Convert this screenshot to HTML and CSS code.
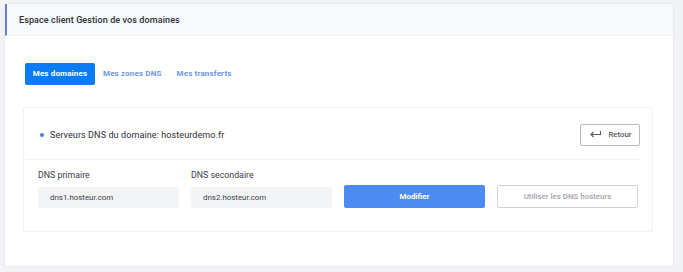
FILE: index.html
```html
<!DOCTYPE html>
<html lang="fr">
<head>
  <meta charset="UTF-8" />
  <meta name="viewport" content="width=device-width, initial-scale=1.0" />
  <title>Espace client - Mes domaines</title>
  <link rel="stylesheet" href="styles.css">
</head>
<body>
  <div class="card">
    <div class="card-header">Espace client Gestion de vos domaines</div>
    <div class="card-body">
      <nav class="tabs">
        <a class="tab active" href="#">Mes domaines</a>
        <a class="tab" href="#">Mes zones DNS</a>
        <a class="tab" href="#">Mes transferts</a>
      </nav>

      <div class="panel">
        <div class="panel-head">
          <div class="panel-title"><span class="dot"></span>Serveurs DNS du domaine: hosteurdemo.fr</div>
          <button class="btn-back">
            <svg width="11" height="7" viewBox="0 0 11 7" fill="none" stroke="#555b66" stroke-width="1.1">
              <path d="M10.5 0 V3.5 H1" />
              <path d="M3.5 1 L1 3.5 L3.5 6" />
            </svg>
            Retour
          </button>
        </div>
        <form class="dns-form">
          <div class="field">
            <label for="dns1">DNS primaire</label>
            <input id="dns1" type="text" value="dns1.hosteur.com" />
          </div>
          <div class="field">
            <label for="dns2">DNS secondaire</label>
            <input id="dns2" type="text" value="dns2.hosteur.com" />
          </div>
          <button type="submit" class="btn-primary">Modifier</button>
          <button type="button" class="btn-outline">Utiliser les DNS hosteurs</button>
        </form>
      </div>
    </div>
  </div>
</body>
</html>
```

FILE: styles.css
```css
* {
  box-sizing: border-box;
}
body {
  margin: 0;
  padding: 3px 8px 4px 4px;
  background: #f2f3f6;
  font-family: Roboto, "Liberation Sans", sans-serif;
  color: #2d3038;
}
.card {
  background: #fff;
  border: 1px solid #e9ebef;
  border-radius: 3px;
  width: 670px;
}
.card-header {
  height: 32px;
  line-height: 32px;
  background: #f8f9fb;
  border-left: 2px solid #6d80cc;
  border-bottom: 1px solid #f0f1f4;
  padding-left: 12px;
  font-size: 9px;
  font-weight: 500;
  letter-spacing: 0.1px;
}
.card-body {
  padding: 27px 20px 34px 18px;
}
.tabs {
  display: flex;
  align-items: center;
  margin-left: 2px;
}
.tab {
  font-size: 8px;
  font-weight: 700;
  color: #6a98e6;
  text-decoration: none;
  height: 22px;
  line-height: 22px;
  padding: 0 7px;
  letter-spacing: 0.15px;
}
.tab.active {
  width: 70px;
  text-align: center;
  background: #0a7bf5;
  color: #fff;
  border-radius: 2px;
  padding: 0;
  margin-right: 1px;
}
.tab + .tab:not(.active) {
  margin-right: 1px;
}
.panel {
  margin-top: 22px;
  border: 1px solid #f0f1f4;
  border-radius: 2px;
  padding: 0 12px 23px 14px;
}
.panel-head {
  display: flex;
  justify-content: space-between;
  align-items: center;
  height: 52px;
  margin-left: -12px;
  padding-left: 12px;
  padding-top: 2px;
  border-bottom: 1px solid #f1f2f5;
}
.panel-title {
  display: flex;
  align-items: center;
  font-size: 9px;
  font-weight: 400;
  color: #2a2d34;
  letter-spacing: 0.1px;
}
.dot {
  width: 4px;
  height: 4px;
  border-radius: 50%;
  background: #4a7fe0;
  margin: 0 6px 0 2px;
}
.btn-back {
  display: flex;
  align-items: center;
  justify-content: center;
  gap: 7px;
  height: 22px;
  width: 60px;
  background: #fff;
  border: 1px solid #b7bcc6;
  border-radius: 2px;
  font-family: inherit;
  font-size: 7.8px;
  font-weight: 500;
  color: #555b66;
  padding: 0 0 0 2px;
}
.dns-form {
  display: grid;
  grid-template-columns: repeat(4, 141px);
  column-gap: 12px;
  align-items: end;
  padding-top: 10px;
}
.field {
  display: flex;
  flex-direction: column;
}
.field label {
  font-size: 8.8px;
  line-height: 11px;
  color: #3a3e46;
  margin-bottom: 6px;
}
.field input {
  height: 21px;
  border: none;
  border-radius: 2px;
  background: #f3f4f6;
  padding: 0 0 0 12px;
  font-family: inherit;
  font-size: 7.9px;
  color: #3a3e46;
}
.btn-primary, .btn-outline {
  height: 23px;
  border-radius: 2px;
  font-family: inherit;
  font-size: 7.9px;
  font-weight: 700;
}
.btn-primary {
  background: #4c8bf0;
  border: none;
  color: #fff;
}
.btn-outline {
  background: #fff;
  border: 1px solid #cfd3da;
  color: #a0a5ad;
  font-weight: 500;
}
```
